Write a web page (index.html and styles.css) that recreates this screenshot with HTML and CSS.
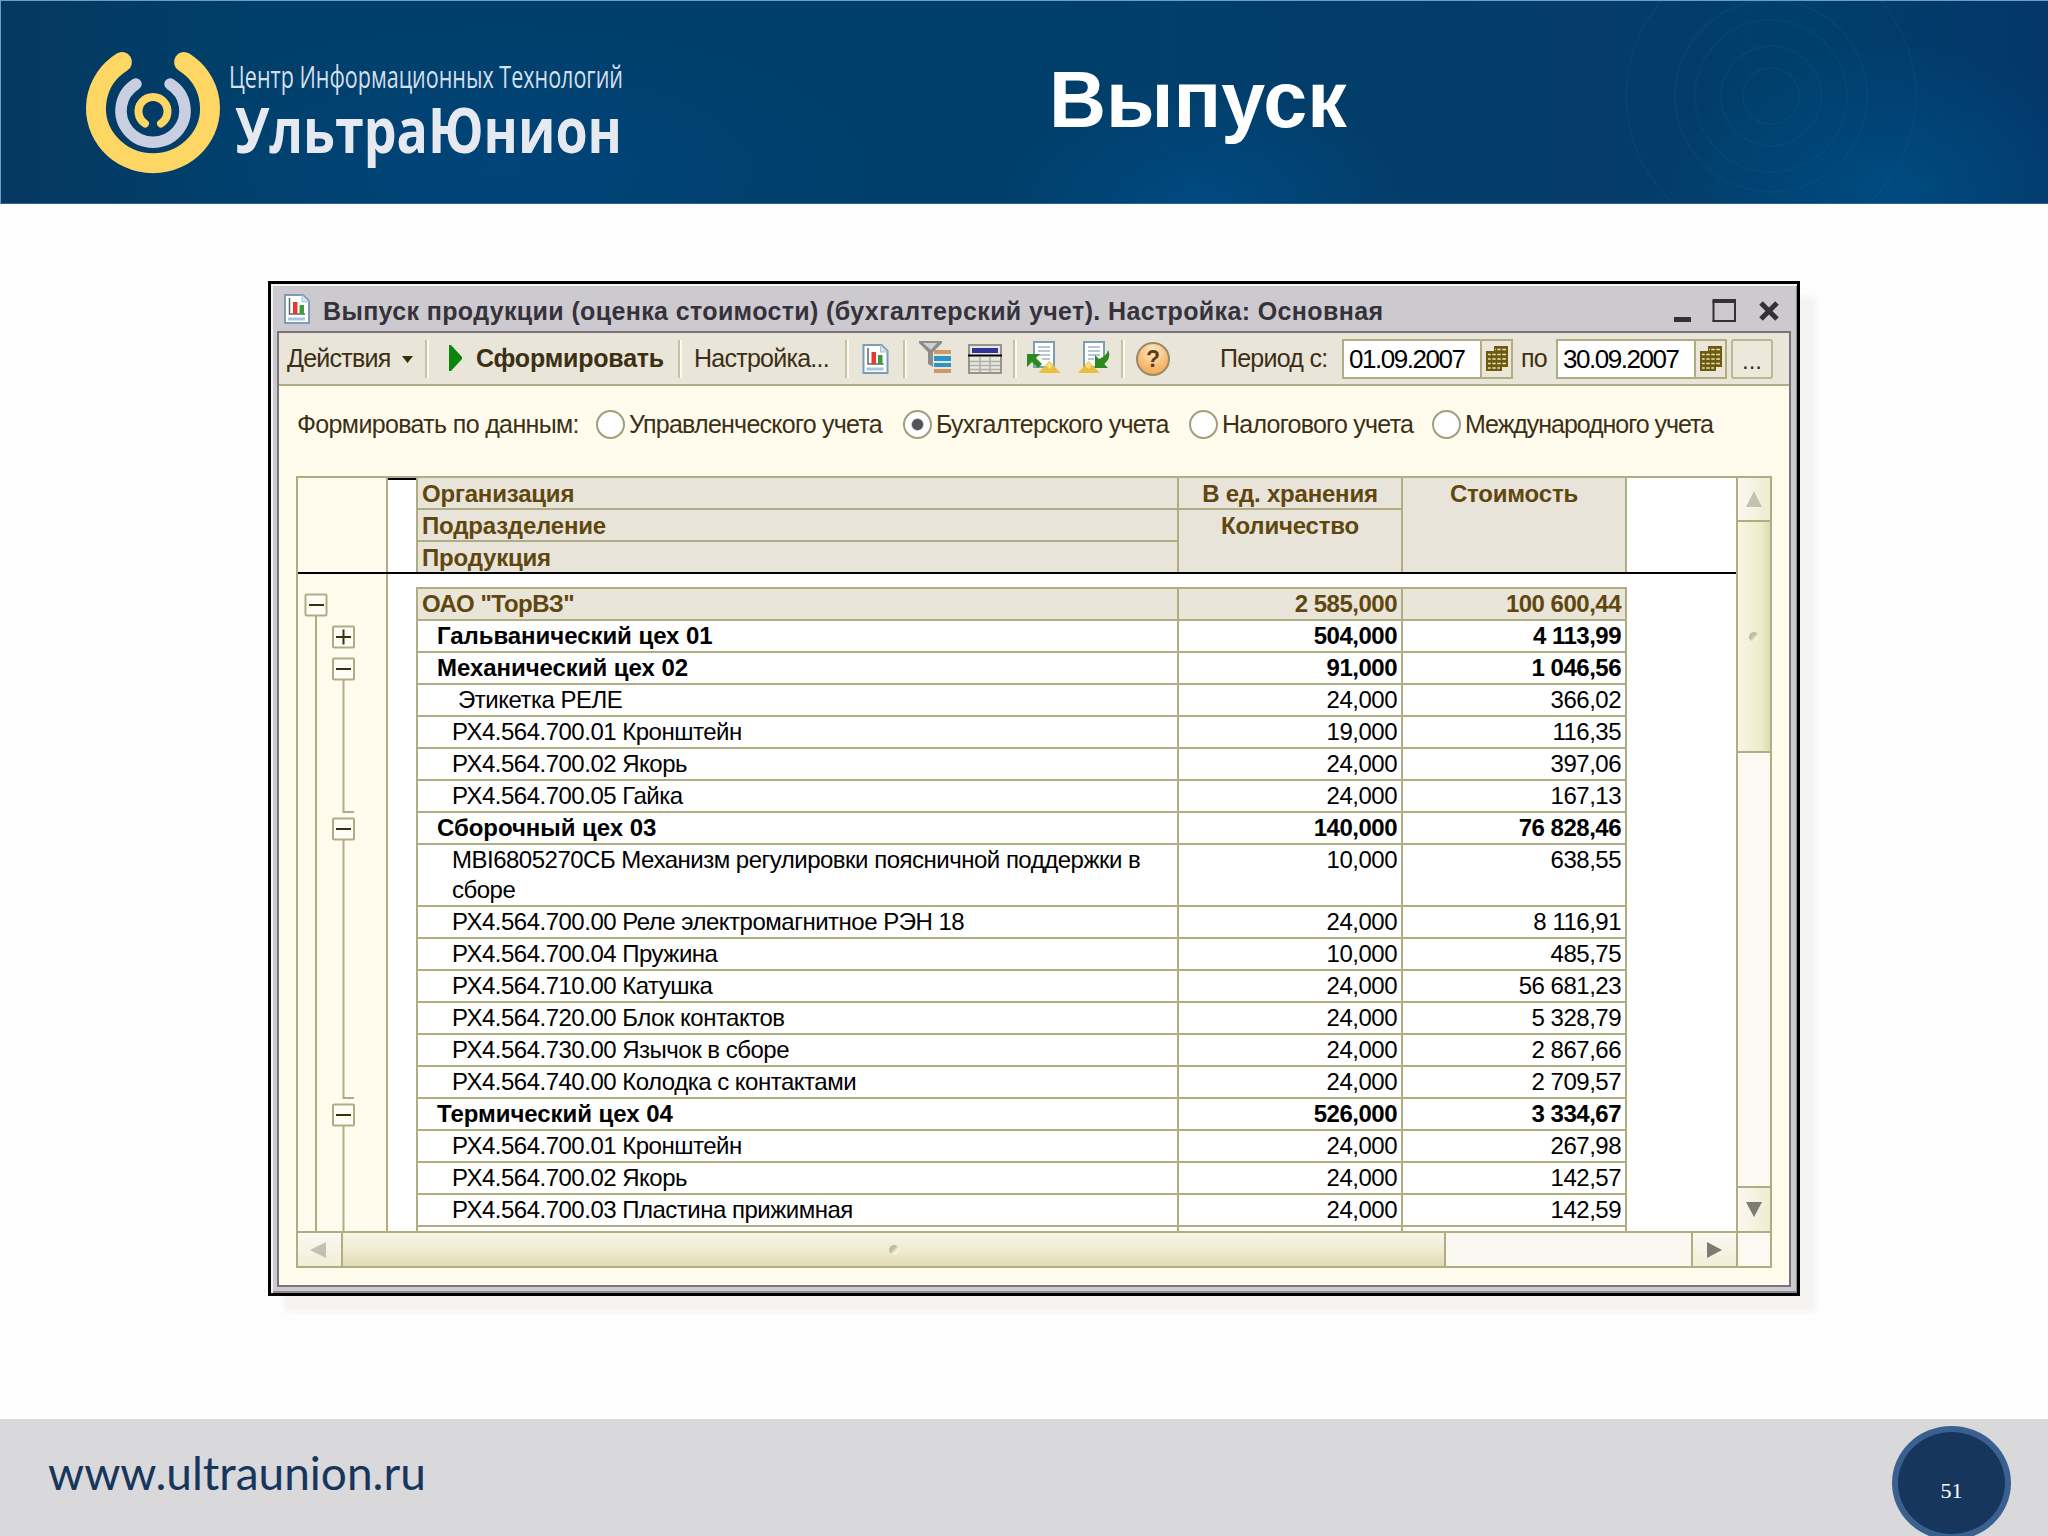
FILE: index.html
```html
<!DOCTYPE html>
<html lang="ru">

<head>
  <meta charset="UTF-8">
  <meta name="viewport" content="width=device-width, initial-scale=1.0">
  <title>Выпуск</title>
  <link rel="stylesheet" href="styles.css">
</head>

<body>
  <header class="header">
    <svg class="rings" width="440" height="200" viewBox="0 0 440 200">
      <g fill="none" stroke="#1a5c8c" stroke-opacity=".2" stroke-width="2">
        <circle cx="170" cy="95" r="28" />
        <circle cx="170" cy="95" r="50" />
        <circle cx="170" cy="95" r="76" />
        <circle cx="170" cy="95" r="96" />
        <circle cx="170" cy="95" r="145" />
      </g>
    </svg>
    <svg class="logo" width="560" height="142" viewBox="80 40 560 142">
      <g fill="none" stroke-linecap="round">
        <path d="M122 62A57 55 0 1 0 184 62" stroke="#fdd663" stroke-width="20" />
        <path d="M136 84A32 31.500 0 1 0 170 84" stroke="#c9cee0" stroke-width="11.500" />
        <path d="M145 123.500A14.500 14.500 0 1 1 161 123.500" stroke="#fdd663" stroke-width="8" />
      </g>
      <text class="logo-top" x="229" y="88" textLength="394" lengthAdjust="spacingAndGlyphs">Центр Информационных Технологий</text>
      <text class="logo-name" x="235" y="153" textLength="387" lengthAdjust="spacingAndGlyphs">УльтраЮнион</text>
    </svg>
    <h1 class="title">Выпуск</h1>
  </header>

  <main class="main">
    <div class="window">
      <div class="caption">
        <svg class="caption-icon" width="26" height="30" viewBox="0 0 26 30">
          <path d="M1 1h18l6 6v22H1z" fill="#fff" stroke="#7d9db5" stroke-width="2" />
          <path d="M18 1v7h7" fill="#d6e4ee" stroke="#a9c0d0" />
          <path d="M5.500 4v16H21" fill="none" stroke="#666" stroke-width="1.500" />
          <path d="M4 25h17" stroke="#aac4da" stroke-width="3" />
          <path d="M9 8h4.500v12H9z" fill="#e33b30" />
          <path d="M15.500 11H20v9h-4.500z" fill="#3d9a3d" />
        </svg>
        <span class="caption-text">Выпуск продукции (оценка стоимости) (бухгалтерский учет). Настройка: Основная</span>
        <svg class="caption-buttons" width="106" height="24" viewBox="0 0 106 24">
          <path d="M0 18h17v5H0z" fill="#333038" />
          <path d="M39.500 2v20h21.500V2" fill="none" stroke="#333038" stroke-width="2" />
          <path d="M38.500 0h23.500v4H38.500zM38.500 21h23.500v2H38.500z" fill="#333038" />
          <path d="M87 4l16 16M103 4L87 20" stroke="#333038" stroke-width="5" />
        </svg>
      </div>

      <div class="panel">
        <div class="toolbar">
          <span class="tool actions">Действия</span>
          <svg class="arrow" width="11" height="7" viewBox="0 0 11 7"><path d="M0 0h11L5.500 7z" fill="#3d2f0a" /></svg>
          <i class="sep s1"></i>
          <svg class="play" width="14" height="26" viewBox="0 0 14 26"><path d="M0 0h2l11 12v2L2 26H0z" fill="#0a860a" /></svg>
          <span class="tool run">Сформировать</span>
          <i class="sep s2"></i>
          <span class="tool setup">Настройка...</span>
          <i class="sep s3"></i>
          <svg class="t-report" width="27" height="30" viewBox="0 0 26 30">
            <path d="M1 1h18l6 6v22H1z" fill="#fff" stroke="#7d9db5" stroke-width="2" />
            <path d="M18 1v7h7" fill="#d6e4ee" stroke="#a9c0d0" />
            <path d="M5.500 4v16H21" fill="none" stroke="#666" stroke-width="1.500" />
            <path d="M4 25h17" stroke="#aac4da" stroke-width="3" />
            <path d="M9 8h4.500v12H9z" fill="#e33b30" />
            <path d="M15.500 11H20v9h-4.500z" fill="#3d9a3d" />
          </svg>
          <i class="sep s4"></i>
          <svg class="t-filter" width="33" height="33" viewBox="0 0 33 33">
            <path d="M15 9h17v4H15z" fill="#cf9866" />
            <path d="M15 15h17v5H15zM15 22h17v4H15z" fill="#2f93c4" />
            <path d="M15 28h17v4H15z" fill="#cf9866" />
            <path d="M0 0h23v2l-9 9v15l-5-3V11L0 2z" fill="#8c8c8c" />
            <path d="M4 2h14l-6 7z" fill="#cfcfcf" />
          </svg>
          <svg class="t-table" width="34" height="30" viewBox="0 0 34 30">
            <path d="M1 1h32v28H1z" fill="#e9e7e2" stroke="#97948c" stroke-width="2" />
            <path d="M4 4h26v5H4z" fill="#32329c" />
            <path d="M0 11.500h34" stroke="#000" stroke-width="2" />
            <path d="M2 17.500h30M2 21.500h30M2 25.500h30M12 13v15M22 13v15" stroke="#b1aea6" stroke-width="1.500" />
          </svg>
          <i class="sep s5"></i>
          <svg class="t-save" width="34" height="33" viewBox="0 0 34 33">
            <path d="M7 1h20v25H7z" fill="#fff" stroke="#7d9db5" stroke-width="2" />
            <path d="M11 6h12M11 10h12M11 14h12M15 18h8" stroke="#b6c6d4" stroke-width="2" />
            <path d="M0 13h13l-4 4 6 6-4 4-6-6-5 5z" fill="#2c8a1e" />
            <path d="M22.500 20l11 12h-22z" fill="#e9bf3c" />
            <path d="M22.500 21l3 4-3 3-3-3z" fill="#fae58f" />
          </svg>
          <svg class="t-load" width="32" height="33" viewBox="0 0 32 33">
            <path d="M6 1h20v25H6z" fill="#fff" stroke="#7d9db5" stroke-width="2" />
            <path d="M10 6h12M10 10h12M10 14h12M10 18h6" stroke="#b6c6d4" stroke-width="2" />
            <path d="M17 27V14l4 4q8-3 9-9 4 8-4 14l4 4z" fill="#2c8a1e" />
            <path d="M10.500 20l11 12H0z" fill="#e9bf3c" />
            <path d="M10.500 21l3 4-3 3-3-3z" fill="#fae58f" />
          </svg>
          <i class="sep s6"></i>
          <span class="help">?</span>
          <span class="tool period">Период с:</span>
          <div class="field"><span class="field-text">01.09.2007</span><span class="cal"><svg width="22" height="26" viewBox="0 0 22 26"><path d="M8 0h14v21h-6v4H0V5h8z" fill="#6b5a10" /><path d="M9 3.500h11M2 8.500h18M2 13h18M2 17.500h18M2 22h12" stroke="#e9dfae" stroke-width="1.500" /><path d="M5.500 7v17M10.500 2v22M15.500 2v19" stroke="#6b5a10" stroke-width="1.500" /></svg></span></div>
          <span class="tool to">по</span>
          <div class="field"><span class="field-text">30.09.2007</span><span class="cal"><svg width="22" height="26" viewBox="0 0 22 26"><path d="M8 0h14v21h-6v4H0V5h8z" fill="#6b5a10" /><path d="M9 3.500h11M2 8.500h18M2 13h18M2 17.500h18M2 22h12" stroke="#e9dfae" stroke-width="1.500" /><path d="M5.500 7v17M10.500 2v22M15.500 2v19" stroke="#6b5a10" stroke-width="1.500" /></svg></span></div>
          <span class="more">...</span>
        </div>

        <div class="options">
          <span class="opt-label">Формировать по данным:</span>
          <span class="radio"></span><span class="opt o1">Управленческого учета</span>
          <span class="radio checked"></span><span class="opt o2">Бухгалтерского учета</span>
          <span class="radio"></span><span class="opt o3">Налогового учета</span>
          <span class="radio"></span><span class="opt o4">Международного учета</span>
        </div>

        <div class="sheet">
          <div class="view">
            <div class="head">
              <div class="head-tree"></div>
              <div class="head-gap"></div>
              <div class="head-names">
                <div>Организация</div>
                <div>Подразделение</div>
                <div>Продукция</div>
              </div>
              <div class="head-qty">
                <div>В ед. хранения</div>
                <div>Количество</div>
              </div>
              <div class="head-cost">Стоимость</div>
            </div>
            <div class="content">
              <svg class="tree" width="88" height="657" viewBox="0 0 88 657">
                <g fill="none" stroke="#b0ad83" stroke-width="2">
                  <path d="M18 42V657M45.500 106V238H56M45.500 266V524H56M45.500 552V657" />
                  <g fill="#fffef6">
                    <rect x="7.500" y="20.500" width="21" height="21" rx="1" />
                    <rect x="35" y="52.500" width="21" height="21" rx="1" />
                    <rect x="35" y="84.500" width="21" height="21" rx="1" />
                    <rect x="35" y="244.500" width="21" height="21" rx="1" />
                    <rect x="35" y="530.500" width="21" height="21" rx="1" />
                  </g>
                </g>
                <path d="M11 31h15M38 63h15M45.500 55.500v15M38 95h15M38 255h15M38 541h15" stroke="#3d2f0a" stroke-width="2" />
              </svg>
              <table class="table">
                <tr class="total"><td>ОАО "ТорВЗ"</td><td>2 585,000</td><td>100 600,44</td></tr>
                <tr class="group"><td>Гальванический цех 01</td><td>504,000</td><td>4 113,99</td></tr>
                <tr class="group"><td>Механический цех 02</td><td>91,000</td><td>1 046,56</td></tr>
                <tr><td class="shift">Этикетка РЕЛЕ</td><td>24,000</td><td>366,02</td></tr>
                <tr><td>РХ4.564.700.01 Кронштейн</td><td>19,000</td><td>116,35</td></tr>
                <tr><td>РХ4.564.700.02 Якорь</td><td>24,000</td><td>397,06</td></tr>
                <tr><td>РХ4.564.700.05 Гайка</td><td>24,000</td><td>167,13</td></tr>
                <tr class="group"><td>Сборочный цех 03</td><td>140,000</td><td>76 828,46</td></tr>
                <tr class="tall"><td>МВI6805270СБ Механизм регулировки поясничной поддержки в<br>сборе</td><td>10,000</td><td>638,55</td></tr>
                <tr><td>РХ4.564.700.00 Реле электромагнитное РЭН 18</td><td>24,000</td><td>8 116,91</td></tr>
                <tr><td>РХ4.564.700.04 Пружина</td><td>10,000</td><td>485,75</td></tr>
                <tr><td>РХ4.564.710.00 Катушка</td><td>24,000</td><td>56 681,23</td></tr>
                <tr><td>РХ4.564.720.00 Блок контактов</td><td>24,000</td><td>5 328,79</td></tr>
                <tr><td>РХ4.564.730.00 Язычок в сборе</td><td>24,000</td><td>2 867,66</td></tr>
                <tr><td>РХ4.564.740.00 Колодка с контактами</td><td>24,000</td><td>2 709,57</td></tr>
                <tr class="group"><td>Термический цех 04</td><td>526,000</td><td>3 334,67</td></tr>
                <tr><td>РХ4.564.700.01 Кронштейн</td><td>24,000</td><td>267,98</td></tr>
                <tr><td>РХ4.564.700.02 Якорь</td><td>24,000</td><td>142,57</td></tr>
                <tr><td>РХ4.564.700.03 Пластина прижимная</td><td>24,000</td><td>142,59</td></tr>
                <tr class="rest"><td></td><td></td><td></td></tr>
              </table>
            </div>
          </div>

          <div class="vscroll">
            <div class="vbtn"><svg width="16" height="16" viewBox="0 0 16 16"><path d="M8 0l8 16H0z" fill="#c3c1b0" /></svg></div>
            <div class="vthumb"><i class="grip"></i></div>
            <div class="vtrack"></div>
            <div class="vbtn down"><svg width="16" height="15" viewBox="0 0 16 15"><path d="M0 0h16L8 15z" fill="#7d7b74" /></svg></div>
          </div>
          <div class="hscroll">
            <div class="hbtn left"><svg width="16" height="16" viewBox="0 0 16 16"><path d="M16 0v16L0 8z" fill="#c3c1b0" /></svg></div>
            <div class="hthumb"><i class="grip"></i></div>
            <div class="htrack"></div>
            <div class="hbtn right"><svg width="15" height="16" viewBox="0 0 15 16"><path d="M0 0v16l15-8z" fill="#7d7b74" /></svg></div>
          </div>
          <div class="corner"></div>
        </div>
      </div>
    </div>
  </main>

  <footer class="footer">
    <span class="site">www.ultraunion.ru</span>
    <span class="page">51</span>
  </footer>
</body>

</html>
```
FILE: styles.css
```css
* {
  margin: 0;
  padding: 0;
  box-sizing: border-box;
}

body {
  width: 2048px;
  height: 1536px;
  overflow: hidden;
  display: flex;
  flex-direction: column;
  background: #fefefe;
  font-family: "Liberation Sans", Arial, sans-serif;
}

svg {
  display: block;
  flex: none;
}

/* header */
.header {
  position: relative;
  flex: none;
  display: flex;
  height: 204px;
  padding-left: 79px;
  border-top: 1px solid #6c9cc8;
  border-left: 1px solid #6c9cc8;
  border-bottom: 1px solid #33618a;
  background:
    radial-gradient(ellipse 200px 130px at 1200px 210px, #004a82, transparent),
    radial-gradient(ellipse 220px 150px at 1890px 190px, #004a80, transparent),
    radial-gradient(ellipse 380px 150px at 500px 170px, #00447a, transparent),
    linear-gradient(90deg, #053862, #003f69 12%, #003f6b 50%, #053c6a 78%, #003f6b 88%, #04376a);
}

.rings {
  position: absolute;
  left: 1600px;
  top: 0;
}

.logo {
  margin-top: 39px;
  overflow: visible;
}

.logo-top {
  font: 31px "Open Sans", sans-serif;
  fill: #d5dfec;
}

.logo-name {
  font: bold 63px "Open Sans", sans-serif;
  fill: #e6e9ef;
}

.title {
  margin: 54px 0 0 409px;
  font-size: 79px;
  line-height: 90px;
  color: #fff;
}

/* report window */
.main {
  flex: none;
  height: 1215px;
  padding: 77px 0 0 268px;
}

.window {
  width: 1532px;
  height: 1015px;
  padding: 0 6px;
  border: 3px solid #000;
  background: #cccace;
  box-shadow: inset 2px 2px 0 #f4f4f6, inset -1px -2px 0 #8d8b8f, 16px 16px 6px #f4f3f1;
}

.caption {
  display: flex;
  height: 47px;
  padding-left: 7px;
}

.caption-icon {
  margin-top: 10px;
}

.caption-text {
  width: 1351px;
  margin-left: 13px;
  font-size: 25px;
  font-weight: bold;
  line-height: 54px;
  letter-spacing: 0.37px;
  color: #35323c;
  white-space: nowrap;
}

.caption-buttons {
  margin-top: 15px;
}

.panel {
  width: 1514px;
  height: 956px;
  border: 2px solid #77747c;
  background: #fffcee;
}

.toolbar {
  display: flex;
  align-items: flex-start;
  height: 53px;
  padding-left: 8px;
  border-bottom: 2px solid #b0ad83;
  background: #e9e5d8;
}

.tool {
  flex: none;
  margin-top: 5px;
  font-size: 25px;
  line-height: 40px;
  letter-spacing: -0.75px;
  color: #3d2f14;
  white-space: nowrap;
}

.actions {
  width: 115px;
}

.arrow {
  margin-top: 23px;
}

.sep {
  flex: none;
  width: 4px;
  height: 38px;
  margin-top: 7px;
  border-left: 2px solid #c6c3a2;
  border-right: 2px solid #fbfaf2;
}

.s1 {
  margin-left: 12px;
}

.play {
  margin: 12px 0 0 20px;
}

.run {
  width: 202px;
  margin-left: 13px;
  font-weight: bold;
  letter-spacing: -0.2px;
}

.setup {
  width: 151px;
  margin-left: 12px;
}

.t-report {
  margin: 11px 0 0 13px;
}

.s4 {
  margin-left: 14px;
}

.t-filter {
  margin: 8px 0 0 12px;
}

.t-table {
  margin: 11px 0 0 16px;
}

.s5 {
  margin-left: 11px;
}

.t-save {
  margin: 8px 0 0 10px;
}

.t-load {
  margin: 8px 0 0 17px;
}

.s6 {
  margin-left: 11px;
}

.help {
  flex: none;
  width: 34px;
  height: 34px;
  margin: 9px 0 0 11px;
  border: 2px solid #9a8a6c;
  border-radius: 50%;
  background: radial-gradient(circle at 50% 25%, #ffe9c8, #f5ae5c 75%);
  font-size: 23px;
  font-weight: bold;
  line-height: 30px;
  text-align: center;
  color: #5c3d17;
}

.period {
  width: 122px;
  margin-left: 50px;
}

.field {
  flex: none;
  display: flex;
  width: 171px;
  height: 40px;
  margin-top: 6px;
  border: 2px solid #b0ad83;
  background: #fff;
}

.field-text {
  width: 136px;
  padding-left: 5px;
  font-size: 26px;
  line-height: 37px;
  letter-spacing: -1.45px;
  color: #000;
}

.cal {
  width: 31px;
  padding: 5px 0 0 4px;
  border-left: 2px solid #b0ad83;
  background: #ebe5da;
}

.to {
  width: 35px;
  margin-left: 8px;
}

.more {
  flex: none;
  width: 42px;
  height: 40px;
  margin: 6px 0 0 4px;
  border: 2px solid #bbb894;
  border-radius: 3px;
  background: #ece9dc;
  font-size: 24px;
  line-height: 40px;
  text-align: center;
  color: #3d2f14;
}

.options {
  display: flex;
  align-items: center;
  height: 90px;
  padding: 0 0 14px 18px;
  font-size: 25px;
  letter-spacing: -0.75px;
  color: #3d2f14;
  white-space: nowrap;
}

.opt-label {
  width: 299px;
  letter-spacing: -0.65px;
}

.radio {
  flex: none;
  width: 29px;
  height: 29px;
  margin-right: 4px;
  border: 2px solid #a19e7d;
  border-radius: 50%;
  background: #fff;
}

.checked {
  background: radial-gradient(circle, #55525a 5px, #fff 6.5px);
}

.o1 {
  width: 274px;
}

.o2 {
  width: 253px;
}

.o3 {
  width: 210px;
}

.o4 {
  letter-spacing: -1.05px;
}

/* spreadsheet */
.sheet {
  display: grid;
  grid-template-columns: 1438px 34px;
  grid-template-rows: 753px 35px;
  width: 1476px;
  height: 792px;
  margin-left: 17px;
  border: 2px solid #b0ad83;
  background: #fff;
}

.view {
  overflow: hidden;
}

.head {
  display: flex;
  height: 96px;
  border-bottom: 2px solid #000;
  font-size: 24px;
  font-weight: bold;
  line-height: 31px;
  letter-spacing: -0.2px;
  color: #5f470f;
}

.head-tree {
  width: 90px;
  border-right: 2px solid #b0ad83;
  background: #fffcee;
}

.head-gap {
  width: 28px;
  border-top: 2px solid #000;
}

.head-names {
  width: 763px;
  border-left: 2px solid #b0ad83;
  border-right: 2px solid #b0ad83;
  background: #e9e4d9;
}

.head-names div {
  height: 32px;
  padding-left: 4px;
  border-bottom: 2px solid #b0ad83;
}

.head-names div:last-child {
  border-bottom: none;
}

.head-qty {
  width: 224px;
  border-right: 2px solid #b0ad83;
  background: #e9e4d9;
  text-align: center;
}

.head-qty div:first-child {
  height: 32px;
  border-bottom: 2px solid #b0ad83;
}

.head-cost {
  width: 224px;
  border-right: 2px solid #b0ad83;
  background: #e9e4d9;
  text-align: center;
}

.content {
  display: flex;
  align-items: flex-start;
}

.tree {
  width: 90px;
  background: #fffcee;
  border-right: 2px solid #b0ad83;
}

.table {
  width: 1211px;
  margin: 13px 0 0 28px;
  table-layout: fixed;
  border-spacing: 0;
  border-top: 2px solid #b0ad83;
  border-left: 2px solid #b0ad83;
  font-size: 24px;
  line-height: 30px;
  letter-spacing: -0.5px;
  color: #000;
}

.table td {
  height: 32px;
  padding-right: 4px;
  border-right: 2px solid #b0ad83;
  border-bottom: 2px solid #b0ad83;
  text-align: right;
  vertical-align: top;
  white-space: nowrap;
}

.table td:first-child {
  width: 761px;
  padding-left: 34px;
  text-align: left;
}

.table .group td,
.table .total td {
  font-weight: bold;
}

.table .group td:first-child {
  padding-left: 19px;
  letter-spacing: -0.05px;
}

.table .total td {
  background: #e9e5d8;
  color: #5f470f;
}

.table .total td:first-child {
  padding-left: 4px;
}

.table td.shift:first-child {
  padding-left: 40px;
}

.table .tall td {
  height: 62px;
}

/* scrollbars */
.vscroll {
  display: flex;
  flex-direction: column;
  border-left: 2px solid #b0ad83;
  background: #fbf9f2;
}

.vbtn {
  display: flex;
  align-items: center;
  justify-content: center;
  height: 44px;
  border-bottom: 2px solid #b0ad83;
  background: linear-gradient(90deg, #fbf9f0, #eeecd0);
}

.down {
  height: 45px;
  border-top: 2px solid #b0ad83;
  border-bottom: none;
}

.vthumb {
  display: flex;
  align-items: center;
  justify-content: center;
  height: 231px;
  border-bottom: 2px solid #b0ad83;
  background: linear-gradient(90deg, #f8f6e4, #ecebc9 75%, #dedbb0);
}

.vtrack {
  flex: 1;
}

.grip {
  width: 10px;
  height: 10px;
  border-radius: 50%;
  background: linear-gradient(135deg, #c1be9f 40%, #f4f1dc 65%);
}

.hscroll {
  display: flex;
  border-top: 2px solid #b0ad83;
  background: #fbf8f2;
}

.hbtn {
  display: flex;
  align-items: center;
  justify-content: center;
  width: 45px;
  border-right: 2px solid #b0ad83;
  background: linear-gradient(#fbf9f2, #f0eed6);
}

.left {
  padding-right: 3px;
}

.right {
  border-left: 2px solid #b0ad83;
  border-right: none;
}

.hthumb {
  display: flex;
  align-items: center;
  justify-content: center;
  width: 1103px;
  border-right: 2px solid #b0ad83;
  background: linear-gradient(#f9f6e6, #efe9cf 60%, #e2dab3);
}

.htrack {
  flex: 1;
}

.corner {
  border-top: 2px solid #b0ad83;
  border-left: 2px solid #b0ad83;
  background: #fbf9f2;
}

/* footer */
.footer {
  flex: none;
  display: flex;
  align-items: flex-start;
  justify-content: space-between;
  height: 117px;
  padding: 7px 37px 0 48px;
  background: #d9d8da;
}

.site {
  margin-top: 19px;
  font-family: Lato, sans-serif;
  font-size: 46px;
  line-height: 56px;
  color: #17365d;
}

.page {
  width: 119px;
  height: 114px;
  border: 6px solid #3a6090;
  border-radius: 50%;
  background: #17365d;
  font-family: "Liberation Serif", serif;
  font-size: 22px;
  line-height: 118px;
  text-align: center;
  color: #fff;
}
```
